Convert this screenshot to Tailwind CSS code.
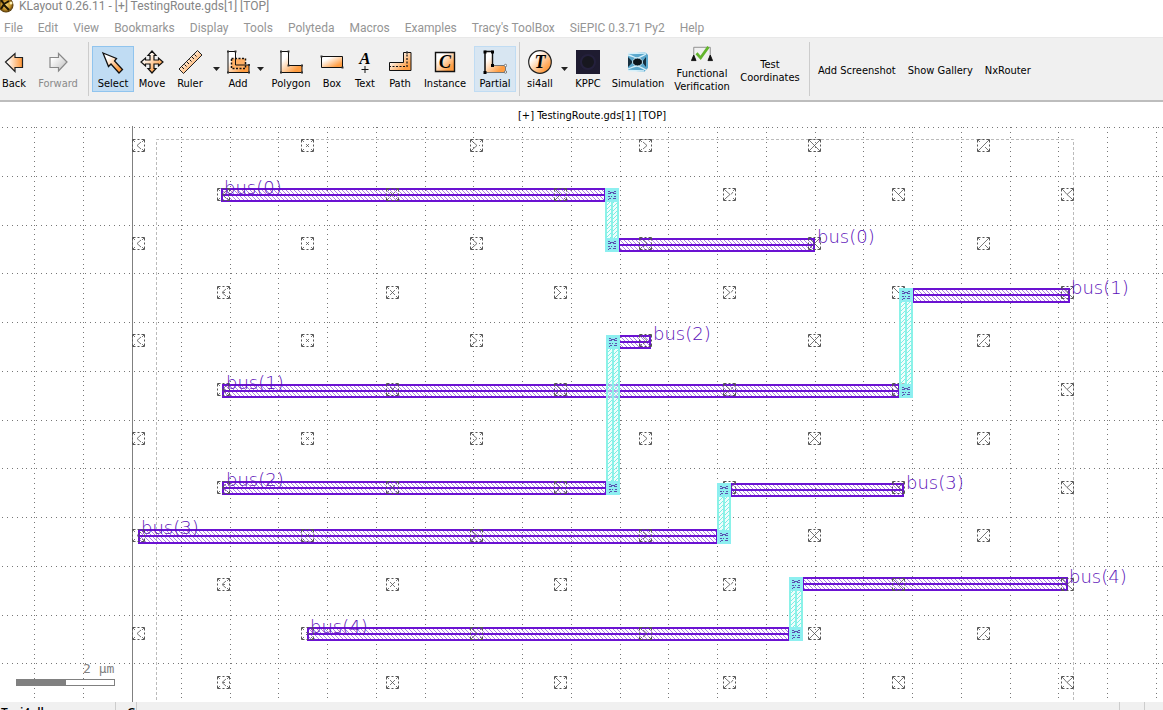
<!DOCTYPE html>
<html lang="en">
<head>
<meta charset="utf-8">
<title>KLayout 0.26.11 - [+] TestingRoute.gds[1] [TOP]</title>
<script src="https://cdn.jsdelivr.net/npm/@tailwindcss/browser@4"></script>
</head>
<body class="h-screen flex flex-col overflow-hidden bg-white font-['DejaVu_Sans_Condensed','Open_Sans',sans-serif] text-xs text-black">
<svg class="absolute w-0 h-0" aria-hidden="true">
  <defs>
    <linearGradient id="o" x1="0" y1="0" x2="1" y2="1"><stop offset="0.25" stop-color="#fff"/><stop offset="0.8" stop-color="#ff9d42"/></linearGradient>
    <linearGradient id="oh" x1="0" y1="0" x2="1" y2="0"><stop offset="0.1" stop-color="#fff"/><stop offset="1" stop-color="#ff9433"/></linearGradient>
    <linearGradient id="gr" x1="0" y1="0" x2="1" y2="1"><stop offset="0.2" stop-color="#fff"/><stop offset="1" stop-color="#bbb"/></linearGradient>
    <radialGradient id="gold"><stop offset="0" stop-color="#f6d97a"/><stop offset="0.6" stop-color="#c8942a"/><stop offset="1" stop-color="#4a3006"/></radialGradient>
  </defs>
</svg>

<header class="flex h-[13px] shrink-0 items-center gap-1 font-[Roboto,sans-serif] text-[#858585]">
  <svg class="h-[13px] w-[15px] shrink-0" viewBox="0 0 15 13"><circle cx="6" cy="5" r="7.500" fill="url(#gold)"/><path d="M1 0L4 4L1 9M4 4L9 1M4 5L9 10" stroke="#1d1403" stroke-width="2" fill="none"/><circle cx="11" cy="3" r="1.500" fill="#fff3b8"/></svg>
  <h1 class="whitespace-nowrap leading-[13px]">KLayout 0.26.11 - [+] TestingRoute.gds[1] [TOP]</h1>
</header>

<nav class="flex h-6 shrink-0 items-center gap-[15px] px-1 pt-[6px] font-[Roboto,sans-serif] text-[#959595] whitespace-nowrap">
  <button>File</button><button>Edit</button><button>View</button><button>Bookmarks</button><button>Display</button><button>Tools</button><button>Polyteda</button><button>Macros</button><button>Examples</button><button>Tracy's ToolBox</button><button>SiEPIC 0.3.71 Py2</button><button>Help</button>
</nav>

<div role="toolbar" class="flex h-[65px] shrink-0 items-center border-t border-b-2 border-t-[#e8e8e8] border-b-[#bdbdbd] bg-[#f0f0f0] text-[11px] leading-[14px] whitespace-nowrap">
  <button class="flex h-[46px] w-7 shrink-0 flex-col items-center justify-center gap-[3px] pt-[3px]"><svg class="h-6 w-6" viewBox="0 0 24 24"><path d="M3.500 12L13 3.500V7.500H20.500V17.500H13V21.500Z" fill="url(#oh)" stroke="#222" stroke-width="1.200"/></svg>Back</button>
  <button class="flex h-[46px] w-[60px] shrink-0 flex-col items-center justify-center gap-[3px] pt-[3px] text-[#8a8a8a]"><svg class="h-6 w-6" viewBox="0 0 24 24"><path d="M21 12L12.500 3.500V7.500H4V17.500H12.500V21Z" fill="url(#gr)" stroke="#888" stroke-width="1.200"/></svg>Forward</button>
  <span class="h-[54px] w-px shrink-0 bg-[#ccc]"></span>
  <button class="ml-[3px] flex h-[46px] w-[42px] shrink-0 flex-col items-center justify-center gap-[3px] border border-[#90c4ee] bg-[#c0dcf3] pt-[3px]"><svg class="h-6 w-6" viewBox="0 0 24 24"><path d="M2 3L15.500 8.500L13.500 11L21.500 19.500L18 23L10 14L7.500 16.500Z" fill="url(#o)" stroke="#111" stroke-width="1.300"/></svg>Select</button>
  <button class="flex h-[46px] w-9 shrink-0 flex-col items-center justify-center gap-[3px] pt-[3px]"><svg class="h-6 w-6" viewBox="0 0 24 24"><path d="M12 1L16 5.500H14V10H18.500V8L23 12L18.500 16V14H14V18.500H16L12 23L8 18.500H10V14H5.500V16L1 12L5.500 8V10H10V5.500H8Z" fill="url(#o)" stroke="#111" stroke-width="1.200"/></svg>Move</button>
  <button class="flex h-[46px] w-10 shrink-0 flex-col items-center justify-center gap-[3px] pt-[3px]"><svg class="h-6 w-6" viewBox="0 0 24 24"><path d="M1 19L19.500 0.500L24 5L5.500 23.500Z" fill="url(#o)" stroke="#222"/><path d="M4 17l2 2M6.500 14.500l2 2M9 12l2 2M11.500 9.500l2 2M14 7l2 2M16.500 4.500l2 2" stroke="#111"/></svg>Ruler</button>
  <button class="flex h-[46px] w-3 shrink-0 items-center justify-center" aria-label="Ruler menu"><svg class="h-1 w-[7px]" viewBox="0 0 7 4"><path d="M0 0H7L3.500 4Z" fill="#222"/></svg></button>
  <button class="flex h-[46px] w-8 shrink-0 flex-col items-center justify-center gap-[3px] pt-[3px]"><svg class="h-6 w-6" viewBox="0 0 24 24"><path d="M2 1.500H9.500V15H23V22.500H2Z" fill="url(#o)" stroke="#111"/><path d="M5.500 8.500H19.500V18.500H5.500Z" fill="#ffb066" stroke="#111" stroke-width="1.500" stroke-dasharray="2 1.500"/><path d="M9.500 8V15H20" fill="none" stroke="#111"/><path d="M1 0.500h2v2h-2zM8.500 0.500h2v2h-2zM1 21.500h2v2h-2zM22 21.500h2v2h-2zM22 14h2v2h-2z" fill="#333"/></svg>Add</button>
  <button class="flex h-[46px] w-3 shrink-0 items-center justify-center" aria-label="Add menu"><svg class="h-1 w-[7px]" viewBox="0 0 7 4"><path d="M0 0H7L3.500 4Z" fill="#222"/></svg></button>
  <button class="flex h-[46px] w-[50px] shrink-0 flex-col items-center justify-center gap-[3px] pt-[3px]"><svg class="h-6 w-6" viewBox="0 0 24 24"><path d="M2 1.500H9.500V15.500H23V22.500H2Z" fill="url(#o)" stroke="#111"/><path d="M1 0.500h2v2h-2zM8.500 0.500h2v2h-2zM8.500 14.500h2v2h-2zM1 21.500h2v2h-2zM22 21.500h2v2h-2zM22 14.500h2v2h-2z" fill="#333"/></svg>Polygon</button>
  <button class="flex h-[46px] w-8 shrink-0 flex-col items-center justify-center gap-[3px] pt-[3px]"><svg class="h-6 w-6" viewBox="0 0 24 24"><path d="M1.500 6.500H22.500V17.500H1.500Z" fill="url(#o)" stroke="#111"/><path d="M0.500 5.500h2v2h-2zM21.500 16.500h2v2h-2z" fill="#333"/></svg>Box</button>
  <button class="flex h-[46px] w-[34px] shrink-0 flex-col items-center justify-center gap-[3px] pt-[3px]"><svg class="h-6 w-6" viewBox="0 0 24 24"><text x="12" y="14" text-anchor="middle" font-family="Liberation Serif, serif" font-size="17" font-weight="bold" font-style="italic">A</text><path d="M12 16V23M8.500 19.500H15.500" stroke="#111"/></svg>Text</button>
  <button class="flex h-[46px] w-9 shrink-0 flex-col items-center justify-center gap-[3px] pt-[3px]"><svg class="h-6 w-6" viewBox="0 0 24 24"><path d="M1.500 12.500H15.500V2.500H23V20.500H1.500Z" fill="url(#o)" stroke="#111"/><path d="M1 16.500H19V2" fill="none" stroke="#111" stroke-width="1.200" stroke-dasharray="2 1.500"/><circle cx="19" cy="2.500" r="1.200" fill="#333"/></svg>Path</button>
  <button class="flex h-[46px] w-[54px] shrink-0 flex-col items-center justify-center gap-[3px] pt-[3px]"><svg class="h-6 w-6" viewBox="0 0 24 24"><path d="M2.500 2.500H21.500V21.500H2.500Z" fill="url(#o)" stroke="#111" stroke-width="1.400"/><text x="12" y="18" text-anchor="middle" font-family="Liberation Serif, serif" font-size="18" font-weight="bold" font-style="italic">C</text></svg>Instance</button>
  <button class="ml-[2px] flex h-[46px] w-[42px] shrink-0 flex-col items-center justify-center gap-[3px] border border-[#c0dcf3] bg-[#d8e6f2] pt-[3px]"><svg class="h-6 w-6" viewBox="0 0 24 24"><path d="M2 1.500H9.500V15.500H22.500V22.500H2Z" fill="url(#o)" stroke="#777"/><path d="M2 22V1.500H9.500V15.500" fill="none" stroke="#111" stroke-width="1.400"/><path d="M0.500 0.500h3v3h-3zM8 0.500h3v3h-3zM8 14h3v3h-3zM0.500 21h3v3h-3z" fill="#000"/><circle cx="22.500" cy="15.500" r="1.200" fill="#fff" stroke="#777"/><circle cx="22.500" cy="22" r="1.200" fill="#fff" stroke="#777"/></svg>Partial</button>
  <span class="ml-[3px] h-[54px] w-px shrink-0 bg-[#ccc]"></span>
  <button class="ml-[2px] flex h-[46px] w-9 shrink-0 flex-col items-center justify-center gap-[3px] pt-[3px]"><svg class="h-6 w-6" viewBox="0 0 24 24"><circle cx="12" cy="12" r="11.300" fill="url(#o)" stroke="#222" stroke-width="1.200"/><text x="12" y="18" text-anchor="middle" font-family="Liberation Serif, serif" font-size="18" font-weight="bold" font-style="italic">T</text></svg>si4all</button>
  <button class="flex h-[46px] w-3 shrink-0 items-center justify-center" aria-label="si4all menu"><svg class="h-1 w-[7px]" viewBox="0 0 7 4"><path d="M0 0H7L3.500 4Z" fill="#222"/></svg></button>
  <button class="flex h-[46px] w-9 shrink-0 flex-col items-center justify-center gap-[3px] pt-[3px]"><svg class="h-6 w-6" viewBox="0 0 24 24"><path d="M0 0H24V24H0Z" fill="#1e1b30"/><circle cx="12" cy="12" r="7" fill="#17171f" stroke="#24203c" stroke-width="2"/></svg>KPPC</button>
  <button class="flex h-[46px] w-16 shrink-0 flex-col items-center justify-center gap-[3px] pt-[3px]"><svg class="h-6 w-6" viewBox="0 0 24 24"><path d="M2 4L19 2L22 5V18L18 22L2 20Z" fill="#5aa7cc"/><path d="M2 5C7 6 9 8 11 8S16 6 20 4M2 19C7 17 9 16 11 16S16 18 20 20M2 3.500L20 3M2 20.500L18 21" stroke="#d6f0fa" stroke-width="1.300" fill="none"/><path d="M2 7L7 12L2 17ZM20 7L16 12L20 17Z" fill="#17303f"/><ellipse cx="11.500" cy="12" rx="5" ry="4" fill="#0c151b" stroke="#bfe4f2"/></svg>Simulation</button>
  <button class="flex h-[54px] w-16 shrink-0 flex-col items-center justify-center pb-px leading-[13px]"><svg class="h-[22px] w-[22px] shrink-0" viewBox="0 0 24 24"><path d="M3 15V2.500H21V15" fill="none" stroke="#888"/><path d="M0.500 17L3 11L5.500 17ZM18.500 17L21 11L23.500 17Z" fill="#111" stroke="#111"/><path d="M6 9L10.500 14L19 2" fill="none" stroke="#62b52c" stroke-width="3"/></svg><span>Functional<br>Verification</span></button>
  <button class="h-[46px] w-[72px] shrink-0 pt-[3px] leading-[13px]">Test<br>Coordinates</button>
  <span class="ml-[3px] h-[54px] w-px shrink-0 bg-[#ccc]"></span>
  <div class="ml-2 flex gap-3 pt-[3px]"><button>Add Screenshot</button><button>Show Gallery</button><button>NxRouter</button></div>
</div>

<h2 class="h-[24px] shrink-0 pl-[21px] text-center text-[11px] leading-[28px]">[+] TestingRoute.gds[1] [TOP]</h2>

<main class="min-h-0 flex-1">
  <svg id="layout" class="block h-full w-full" role="img" aria-label="Layout canvas">
    <defs>
      <pattern id="hp" width="4" height="4" patternUnits="userSpaceOnUse"><path d="M-1 -1L5 5M-1 3L1 5M3 -1L5 1" stroke="#6a10d0" stroke-width="0.800" stroke-opacity="0.700"/></pattern>
      <pattern id="hc" width="4" height="4" patternUnits="userSpaceOnUse"><path d="M-1 5L5 -1M-1 1L1 -1M3 5L5 3" stroke="#7deee4" stroke-width="1"/></pattern>
    </defs>
  </svg>
</main>

<footer class="flex h-2 shrink-0 overflow-hidden bg-[#f0f0f0] font-['Open_Sans',sans-serif] leading-[22px]">
  <span class="w-[116px] shrink-0 border-r border-[#ccc] pl-px font-semibold">T: si4all</span>
  <span class="w-[21px] shrink-0 border-r border-[#ccc] pl-[11px] font-semibold">G</span>
  <span class="flex-1 border-r border-[#ccc]"></span>
  <span class="w-[25px] shrink-0 border-r border-[#ccc]"></span>
  <span class="w-[18px] shrink-0"></span>
</footer>

<script>
const TOP = 126, NS = 'http://www.w3.org/2000/svg', root = document.getElementById('layout');
function add(tag, attrs, text) {
  const e = document.createElementNS(NS, tag);
  for (const k in attrs) e.setAttribute(k, attrs[k]);
  if (text) e.textContent = text;
  g.appendChild(e);
  return e;
}
let g = root;
g = add('g', { transform: 'translate(0 -' + TOP + ')' });

// Dotted grid, ten dots to a cell
const cell = 48.76, ox = 132, oy = 127;
for (let i = -2; i < 40; i++) {
  const x = Math.round(ox + i * cell) + 0.5;
  add('path', { d: 'M' + x + ' 127V1400', stroke: '#777', 'stroke-dasharray': '1 3.876', 'shape-rendering': 'crispEdges' });
}
for (let i = 0; i < 24; i++) {
  const y = Math.round(oy + i * cell) + 0.5;
  add('path', { d: 'M0 ' + y + 'H2400', stroke: '#777', 'stroke-dasharray': '1 3.876', 'stroke-dashoffset': '-2', 'shape-rendering': 'crispEdges' });
}
add('path', { d: 'M132.5 126V1400', stroke: '#808080' });
add('path', { d: 'M156.5 1400V139.5H1073.5V1400', fill: 'none', stroke: '#bbb', 'stroke-dasharray': '3 2' });

// Wires: x1, y1, x2, y2
const wires = [[221,188,606,202],[618,238,815,252],[912,288,1070,303],[222,384,900,398],[618,335,651,349],
  [222,481,607,495],[730,483,904,497],[138,529,718,544],[802,577,1068,591],[307,627,790,641]];
function wire(r, color, fill, vertical) {
  const [a, b, c, d] = r;
  add('path', { d: `M${a+1} ${b+1}H${c-1}V${d-1}H${a+1}Z`, fill: 'url(#' + fill + ')', stroke: color, 'stroke-width': 2 });
  const m = Math.floor(vertical ? (a + c) / 2 : (b + d) / 2);
  add('path', { d: vertical ? `M${m} ${b}V${d}` : `M${a} ${m}H${c}`, stroke: color, 'stroke-width': 2 });
}
wires.forEach(r => wire(r, '#6b12d2', 'hp', false));

// Cell markers on a staggered lattice
const inner = ['M9 3L5 6.5L9 10', 'M9 3L5 6.5L9 10M6 6.5h2', 'M5 5L8 8M8 5L5 8', 'M4 4L9 9M4 9L9 4', 'M3 3L7 6.5L3 10M9 6.500h1', 'M3 3L7 7M3 10L7 6',
  'M4 3L8 6.5L4 10', 'M3 3L7 6.5L3 10M8 6.500L10 4', 'M3 3L10 10M10 3L3 10', 'M3 3L10 10M10 3L6 7', 'M3 10L10 3M8 8L10 10', 'M3 3L6 6.5L10 3M6 6.5L10 10'];
function marks() {
  for (let r = 0; r < 12; r++) for (let k = r % 2; k < 12; k += 2) {
    const x = Math.round(132.3 + k * 84.42), y = Math.round(139.4 + r * 48.75);
    add('path', { transform: `translate(${x} ${y})`, d: 'M.5 .5H12.5V12.5H.5Z', fill: 'none', stroke: '#555', 'stroke-dasharray': '3 2 2 2 3 0', 'stroke-width': 1 });
    add('path', { transform: `translate(${x} ${y})`, d: 'M1 1L3 3M12 1L10 3M1 12L3 10M12 12L10 10' + inner[k], fill: 'none', stroke: '#555', 'stroke-width': 0.8 });
  }
}
marks();

const links = [[605,188,619,252],[899,288,913,398],[606,335,620,495],[717,483,731,544],[789,577,803,641]];
links.forEach(r => {
  add('path', { d: `M${r[0]} ${r[1]}H${r[2]}V${r[3]}H${r[0]}Z`, fill: '#e6fcfa', 'fill-opacity': 0.6 });
  wire(r, '#8af2e8', 'hc', true);
  [r[1], r[3] - 14].forEach(y => {
    add('path', { d: `M${r[0]} ${y}H${r[2]}V${y+14}H${r[0]}Z`, fill: '#8deff0' });
    add('path', { transform: `translate(${r[0]} ${y})`, d: 'M3 3h2v1h-2zM9 3h2v1h-2zM5 4h4v1h-4zM3 5h3v1h-3zM8 5h3v1h-3zM3 8h2v1h-2zM6 8h1v1h-1zM9 8h2v1h-2zM4 10h2v1h-2zM8 10h3v1h-3zM3 11h1v1h-1z', fill: '#5a50b0' });
  });
});

const labels = [['bus(0)',224,194],['bus(0)',817,243],['bus(1)',1071,294],['bus(1)',226,389],['bus(2)',653,340],
  ['bus(2)',226,486],['bus(3)',906,489],['bus(3)',141,534],['bus(4)',1069,583],['bus(4)',310,633]];
labels.forEach(([t, x, y]) => add('text', { x, y, fill: '#5a0fb8', 'font-family': 'DejaVu Sans, sans-serif', 'font-weight': 200, 'font-size': 18 }, t));

// Scale bar, held at the lower left corner
const bar = document.createElementNS(NS, 'svg');
bar.setAttribute('y', '100%'); bar.setAttribute('overflow', 'visible');
root.appendChild(bar); g = bar;
add('rect', { x: 16.5, y: -22.5, width: 98, height: 6, fill: '#fff', stroke: '#808080' });
add('rect', { x: 16, y: -23, width: 50, height: 7, fill: '#808080' });
add('text', { x: 83, y: -29, fill: '#808080', 'font-family': 'DejaVu Sans Mono, monospace', 'font-size': 13 }, '2 µm');
</script>
</body>
</html>
